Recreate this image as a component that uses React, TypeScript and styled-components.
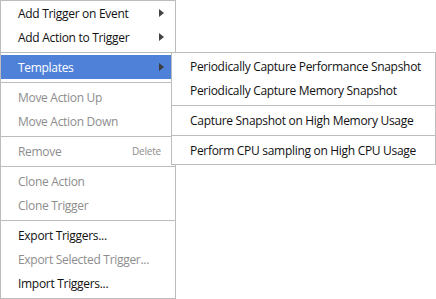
import React from "react";
import styled, { createGlobalStyle } from "styled-components";

const Global = createGlobalStyle`
  html, body { margin: 0; padding: 0; background: #ffffff; }
  body { font-family: "Open Sans", "Noto Sans", sans-serif; }
  * { box-sizing: border-box; }
`;

const Stage = styled.div`
  position: relative;
  width: 436px;
  height: 299px;
  overflow: hidden;
  background: #ffffff;
`;

const Menu = styled.div`
  display: flex;
  flex-direction: column;
  width: 176px;
  height: 299px;
  border: 1px solid #bcbcbc;
  background: #ffffff;
  padding: 0 0 3px 0;
`;

const SubMenu = styled.div`
  position: absolute;
  left: 171px;
  top: 52px;
  width: 265px;
  height: 113px;
  display: flex;
  flex-direction: column;
  border: 1px solid #bcbcbc;
  background: #ffffff;
  padding: 1px 0 2px 0;
`;

const Item = styled.div<{ $disabled?: boolean; $active?: boolean; $indent?: number }>`
  display: flex;
  align-items: center;
  height: 24px;
  flex: 0 0 24px;
  padding-left: ${(p) => p.$indent ?? 17}px;
  padding-right: 10px;
  font-size: 12px;
  letter-spacing: -0.3px;
  white-space: nowrap;
  color: ${(p) => (p.$active ? "#ffffff" : p.$disabled ? "#8d8d8d" : "#111111")};
  background: ${(p) => (p.$active ? "#5081d8" : "transparent")};
`;

const Label = styled.span`
  flex: 1 1 auto;
`;

const Shortcut = styled.span`
  font-size: 10px;
  letter-spacing: -0.2px;
  color: #8d8d8d;
  margin-right: 4px;
`;

const Arrow = styled.span<{ $dark?: boolean }>`
  width: 0;
  height: 0;
  border-top: 4px solid transparent;
  border-bottom: 4px solid transparent;
  border-left: 5px solid ${(p) => (p.$dark ? "#3c3c3c" : "#444444")};
  margin-right: 1px;
`;

const Separator = styled.div`
  flex: 0 0 6px;
  display: flex;
  align-items: center;
  &::after {
    content: "";
    display: block;
    width: 100%;
    height: 1px;
    background: #bcbcbc;
  }
`;

export default function App() {
  return (
    <>
      <Global />
      <Stage>
        <Menu>
          <Item>
            <Label>Add Trigger on Event</Label>
            <Arrow />
          </Item>
          <Item>
            <Label>Add Action to Trigger</Label>
            <Arrow />
          </Item>
          <Separator />
          <Item $active>
            <Label>Templates</Label>
            <Arrow $dark />
          </Item>
          <Separator />
          <Item $disabled>
            <Label>Move Action Up</Label>
          </Item>
          <Item $disabled>
            <Label>Move Action Down</Label>
          </Item>
          <Separator />
          <Item $disabled>
            <Label>Remove</Label>
            <Shortcut>Delete</Shortcut>
          </Item>
          <Separator />
          <Item $disabled>
            <Label>Clone Action</Label>
          </Item>
          <Item $disabled>
            <Label>Clone Trigger</Label>
          </Item>
          <Separator />
          <Item>
            <Label>Export Triggers...</Label>
          </Item>
          <Item $disabled>
            <Label>Export Selected Trigger...</Label>
          </Item>
          <Item>
            <Label>Import Triggers...</Label>
          </Item>
        </Menu>
        <SubMenu>
          <Item $indent={18}>
            <Label>Periodically Capture Performance Snapshot</Label>
          </Item>
          <Item $indent={18}>
            <Label>Periodically Capture Memory Snapshot</Label>
          </Item>
          <Separator />
          <Item $indent={18}>
            <Label>Capture Snapshot on High Memory Usage</Label>
          </Item>
          <Separator />
          <Item $indent={18}>
            <Label>Perform CPU sampling on High CPU Usage</Label>
          </Item>
        </SubMenu>
      </Stage>
    </>
  );
}
